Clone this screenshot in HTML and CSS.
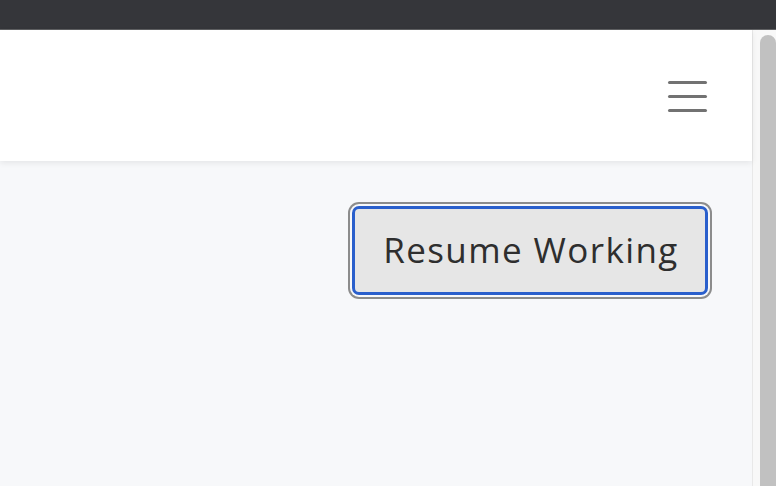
FILE: index.html
```html
<!DOCTYPE html>
<html>
<head>
<meta charset="utf-8">
<link rel="stylesheet" href="styles.css">
</head>
<body>
<div class="topbar"></div>
<div class="window">
  <div class="page">
    <header class="navbar">
      <button class="menu" aria-label="Menu">
        <span></span><span></span><span></span>
      </button>
    </header>
    <main class="main">
      <button class="resume">Resume Working</button>
    </main>
  </div>
  <div class="scrollbar"><div class="thumb"></div></div>
</div>
</body>
</html>
```
FILE: styles.css
```css
html, body {
  margin: 0;
  padding: 0;
  height: 100%;
  overflow: hidden;
}
body {
  display: flex;
  flex-direction: column;
  font-family: "Open Sans", "Noto Sans", sans-serif;
  background: #f7f8fa;
}
.topbar {
  height: 29px;
  background: #35363a;
  border-bottom: 1px solid #5f6062;
  flex: none;
}
.window {
  flex: 1;
  display: flex;
  min-height: 0;
}
.page {
  flex: 1;
  display: flex;
  flex-direction: column;
  background: #f7f8fa;
}
.navbar {
  height: 131px;
  background: #ffffff;
  box-shadow: 0 2px 6px rgba(0, 0, 0, 0.08);
  display: flex;
  align-items: center;
  justify-content: flex-end;
  padding-right: 45px;
  position: relative;
  z-index: 1;
}
.menu {
  background: none;
  border: 0;
  padding: 0;
  width: 39px;
  display: flex;
  flex-direction: column;
  gap: 11px;
  margin-top: 1px;
}
.menu span {
  display: block;
  height: 3px;
  border-radius: 2px;
  background: #727272;
}
.main {
  flex: 1;
  display: flex;
  justify-content: flex-end;
  align-items: flex-start;
  padding: 45px 44px 0 0;
}
.resume {
  width: 356px;
  height: 89px;
  box-sizing: border-box;
  border: 3px solid #2a5fcc;
  border-radius: 7px;
  background: #e6e6e6;
  color: #2e2e2e;
  font-family: "Open Sans", "Noto Sans", sans-serif;
  font-size: 35px;
  font-weight: 400;
  letter-spacing: 1.4px;
  padding: 0 0 2px 2px;
  box-shadow: 0 0 0 2px #f7f8fa, 0 0 0 4px #8c8c8c;
}
.scrollbar {
  width: 24px;
  box-sizing: border-box;
  border-left: 1px solid #e8e8e8;
  background: #f8f8f8;
  padding: 5px 0 0 7px;
  flex: none;
}
.thumb {
  height: 100%;
  background: #c1c1c1;
  border-radius: 8px 8px 0 0;
}
```
